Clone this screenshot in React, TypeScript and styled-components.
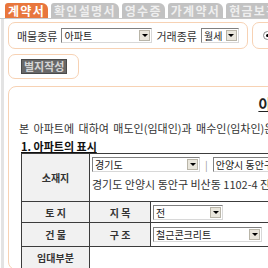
import { FC, ReactNode } from "react";
import styled, { createGlobalStyle } from "styled-components";

const GlobalStyle = createGlobalStyle`
  html, body {
    margin: 0;
    padding: 0;
    background: #ffffff;
    overflow: hidden;
  }
  body {
    font-family: "Noto Sans CJK KR", "Noto Sans", sans-serif;
    color: #333333;
  }
`;

const tabs = ["계약서", "확인설명서", "영수증", "가계약서", "현금보관증"];

const Select: FC<{ width: number; children: ReactNode }> = ({ width, children }) => (
  <SelectBox $w={width}>
    <SelectText>{children}</SelectText>
    <SelectArrow>
      <Triangle />
    </SelectArrow>
  </SelectBox>
);

const App: FC = () => {
  return (
    <Page>
      <GlobalStyle />
      <TabBar>
        {tabs.map((t, i) => (
          <Tab key={t} $active={i === 0}>
            {t}
          </Tab>
        ))}
      </TabBar>
      <Body>
        <PanelRow>
          <Panel $w={240}>
            <FieldLabel>매물종류</FieldLabel>
            <Select width={91}>아파트</Select>
            <FieldLabel>거래종류</FieldLabel>
            <Select width={38}>월세</Select>
          </Panel>
          <Panel $w={120}>
            <Radio />
          </Panel>
        </PanelRow>
        <Panel $w={71} $h={25}>
          <DarkButton>별지작성</DarkButton>
        </Panel>
        <Sheet>
          <Title>아파트 월세 계약서</Title>
          <Intro>
            본 아파트에 대하여 매도인(임대인)과 매수인(임차인)은 합의에 의하여
            다음과 같이 계약을 체결한다.
          </Intro>
          <SectionTitle>1. 아파트의 표시</SectionTitle>
          <Table>
            <colgroup>
              <col style={{ width: 68 }} />
              <col style={{ width: 61 }} />
              <col />
            </colgroup>
            <tbody>
              <tr>
                <LabelCell $h={47}>소재지</LabelCell>
                <ValueCell colSpan={2} $top>
                  <SelectLine>
                    <Select width={108}>경기도</Select>
                    <Divider>|</Divider>
                    <Select width={90}>안양시 동안구</Select>
                  </SelectLine>
                  <Address>경기도 안양시 동안구 비산동 1102-4 진흥아파트</Address>
                </ValueCell>
              </tr>
              <tr>
                <LabelCell $h={20}>토 지</LabelCell>
                <LabelCell>지 목</LabelCell>
                <ValueCell>
                  <Select width={70}>전</Select>
                </ValueCell>
              </tr>
              <tr>
                <LabelCell $h={23}>건 물</LabelCell>
                <LabelCell>구 조</LabelCell>
                <ValueCell>
                  <Select width={109}>철근콘크리트</Select>
                </ValueCell>
              </tr>
              <tr>
                <LabelCell $h={21}>임대부분</LabelCell>
                <ValueCell colSpan={2} />
              </tr>
            </tbody>
          </Table>
        </Sheet>
      </Body>
    </Page>
  );
};

export default App;

const Page = styled.div`
  width: 700px;
`;

const TabBar = styled.div`
  display: flex;
  align-items: flex-end;
  column-gap: 3px;
  height: 18px;
  padding-left: 5px;
  border-bottom: 1px solid #c9c9c9;
`;

const Tab = styled.div<{ $active?: boolean }>`
  height: 15px;
  padding: 0 3px;
  border-radius: 3px 6px 0 0;
  background: ${(p) => (p.$active ? "#e8763c" : "#c2c2c2")};
  color: ${(p) => (p.$active ? "#ffffff" : "#efefef")};
  font-size: 12px;
  font-weight: 700;
  letter-spacing: 1.3px;
  line-height: 15px;
  white-space: nowrap;
`;

const Body = styled.div`
  margin-left: 1px;
  border-left: 3px solid #e3e3e3;
  padding: 3px 0 0 4px;
  display: flex;
  flex-direction: column;
  row-gap: 5px;
`;

const PanelRow = styled.div`
  display: flex;
  column-gap: 4px;
`;

const Panel = styled.div<{ $w: number; $h?: number }>`
  box-sizing: border-box;
  width: ${(p) => p.$w}px;
  height: ${(p) => p.$h ?? 27}px;
  border: 1px solid #f7d2b4;
  border-radius: 7px;
  display: flex;
  align-items: center;
  column-gap: 4px;
  padding-left: 8px;
`;

const FieldLabel = styled.span`
  font-size: 11px;
  color: #333333;
  white-space: nowrap;
`;

const SelectBox = styled.div<{ $w: number }>`
  box-sizing: border-box;
  width: ${(p) => p.$w}px;
  height: 15px;
  display: flex;
  align-items: center;
  justify-content: space-between;
  border: 1px solid #808080;
  border-right-color: #d8d8d8;
  border-bottom-color: #d8d8d8;
  background: #ffffff;
  padding: 0 1px 0 2px;
  flex-shrink: 0;
`;

const SelectText = styled.span`
  font-size: 10px;
  line-height: 13px;
  color: #222222;
  white-space: nowrap;
  overflow: hidden;
`;

const SelectArrow = styled.span`
  box-sizing: border-box;
  width: 11px;
  height: 11px;
  background: #e9e6dc;
  border: 1px solid #b9b5a8;
  display: flex;
  align-items: center;
  justify-content: center;
  flex-shrink: 0;
`;

const Triangle = styled.span`
  width: 0;
  height: 0;
  border-left: 3px solid transparent;
  border-right: 3px solid transparent;
  border-top: 3px solid #000000;
`;

const Radio = styled.span`
  box-sizing: border-box;
  width: 9px;
  height: 9px;
  border: 1px solid #888888;
  border-radius: 50%;
  display: flex;
  align-items: center;
  justify-content: center;
  margin-left: 2px;
  &::after {
    content: "";
    width: 3px;
    height: 3px;
    border-radius: 50%;
    background: #000000;
  }
`;

const DarkButton = styled.div`
  margin-left: 4px;
  padding: 0 2px;
  height: 13px;
  background: #686868;
  border: 1px solid #4a4a4a;
  color: #d4d4d4;
  font-size: 11px;
  font-weight: 700;
  line-height: 13px;
  white-space: nowrap;
`;

const Sheet = styled.div`
  box-sizing: border-box;
  width: 618px;
  margin-top: 2px;
  border: 1px solid #f7d2b4;
  border-radius: 8px;
  padding: 8px 10px 0 10px;
`;

const Title = styled.div`
  text-align: center;
  font-size: 15px;
  font-weight: 700;
  line-height: 17px;
  color: #222222;
  text-decoration: underline;
`;

const Intro = styled.p`
  margin: 9px 0 0;
  font-size: 11px;
  line-height: 14px;
  word-spacing: 2px;
  white-space: nowrap;
  color: #333333;
`;

const SectionTitle = styled.div`
  margin: 5px 0 0 2px;
  font-size: 11px;
  font-weight: 700;
  line-height: 13px;
  color: #111111;
  text-decoration: underline;
`;

const Table = styled.table`
  margin: 0 0 0 2px;
  width: 560px;
  border-collapse: collapse;
  table-layout: fixed;
  border: 1px solid #3c3c3c;
`;

const LabelCell = styled.td<{ $h?: number }>`
  height: ${(p) => (p.$h ? `${p.$h}px` : "auto")};
  padding: 0;
  border: 1px solid #3c3c3c;
  background: #f1f1f1;
  text-align: center;
  font-size: 10px;
  font-weight: 700;
  line-height: 13px;
  color: #333333;
  white-space: nowrap;
`;

const ValueCell = styled.td<{ $top?: boolean }>`
  padding: ${(p) => (p.$top ? "3px 2px 1px" : "1px 2px")};
  border: 1px solid #3c3c3c;
  background: #ffffff;
  vertical-align: ${(p) => (p.$top ? "top" : "middle")};
  line-height: 13px;
`;

const SelectLine = styled.div`
  display: flex;
  align-items: center;
  column-gap: 3px;
`;

const Divider = styled.span`
  font-size: 10px;
  color: #999999;
  padding: 0 2px;
`;

const Address = styled.div`
  margin-top: 6px;
  font-size: 11px;
  line-height: 13px;
  color: #333333;
  white-space: nowrap;
`;
